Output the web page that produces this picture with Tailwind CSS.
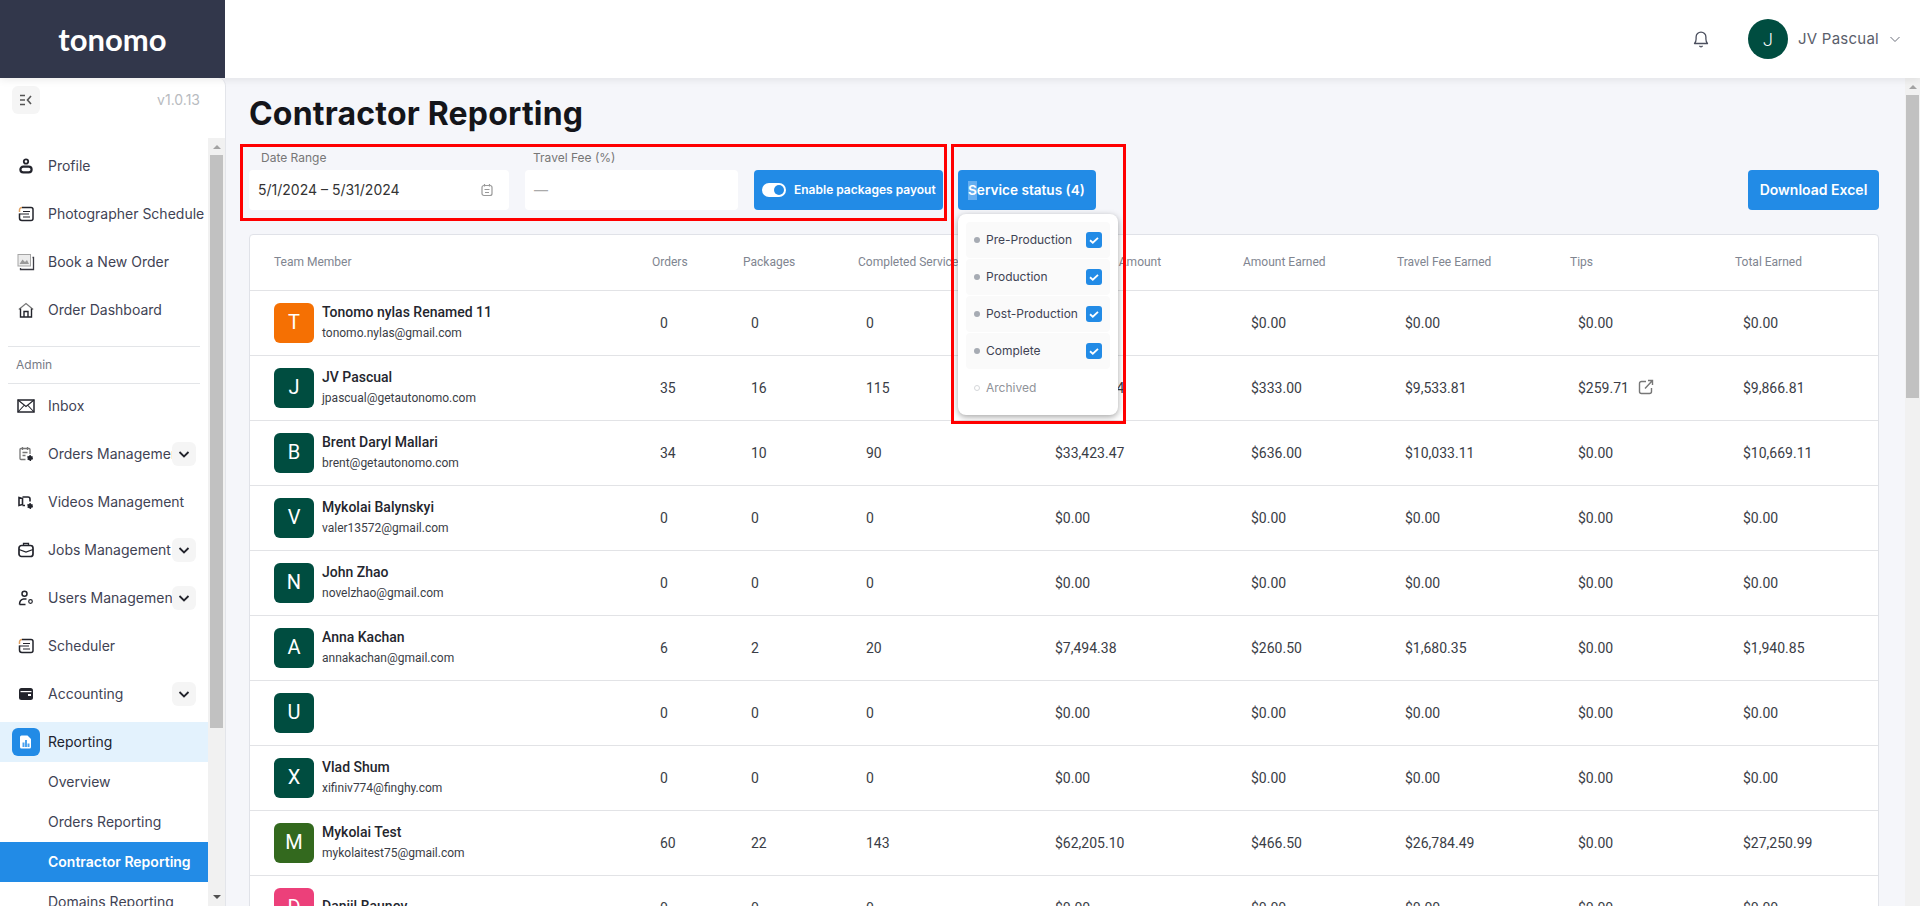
<!DOCTYPE html>
<html lang="en">

<head>
    <meta charset="UTF-8">
    <title>Contractor Reporting</title>
    <script src="https://cdn.jsdelivr.net/npm/@tailwindcss/browser@4"></script>
</head>

<body class="font-[Inter,sans-serif] bg-[#f5f6fa] overflow-hidden">
    <div class="relative flex flex-col h-[906px] overflow-hidden">

        <!-- top bar -->
        <header class="relative z-10 flex items-center h-[78px] bg-white shadow-[0_2px_8px_rgba(0,0,0,0.08)] shrink-0">
            <div class="flex items-center justify-center w-[225px] h-full bg-[#32374b] text-white text-[31px] font-bold font-[Lato,sans-serif]">tonomo</div>
            <div class="flex-1"></div>
            <svg class="w-5 h-5 text-[#4b4f5e] mr-[37px]" viewBox="0 0 20 20" fill="none" stroke="currentColor" stroke-width="1.3" stroke-linejoin="round"><path d="M3.5 14.5c1.2-1.2 1.6-2.4 1.6-4.5V8a4.9 4.9 0 0 1 9.800 0v2c0 2.100.4 3.300 1.600 4.500z" /><path d="M8.500 16.800a1.600 1.600 0 0 0 3 0" /></svg>
            <div class="flex items-center justify-center w-10 h-10 rounded-full bg-[#004d40] text-white text-[18px] font-light font-[Roboto,sans-serif]">J</div>
            <span class="ml-[10px] text-[15px] text-[#5a5e6b] tracking-[0.25px]">JV Pascual</span>
            <svg class="w-[12px] h-[12px] ml-[10px] mr-[19px] text-[#6b6f7b]" viewBox="0 0 12 12" fill="none" stroke="currentColor" stroke-width="1"><path d="M1.500 4l4.500 4.500L10.500 4" /></svg>
        </header>

        <div class="flex flex-1 min-h-0">

            <!-- sidebar -->
            <aside class="flex flex-col w-[226px] shrink-0 bg-white border-r border-[#e3e5ea] rounded-tr-lg">
                <div class="flex items-start justify-between h-[60px] pt-2 pl-3 pr-[25px] shrink-0">
                    <div class="flex items-center justify-center w-7 h-7 bg-[#f5f5f5] rounded-md">
                        <svg class="w-4 h-4 text-[#555]" viewBox="0 0 16 16" fill="none" stroke="currentColor" stroke-width="1.600"><path d="M2 3.500h5M2 8h5M2 12.500h5M13 4L9.500 8l3.500 4" /></svg>
                    </div>
                    <span class="text-sm leading-7 text-[#b8bbc0]">v1.0.13</span>
                </div>
                <div class="flex flex-1 min-h-0">
                    <nav class="w-[208px] overflow-hidden text-sm text-[#3f4354] pt-1">
                        <div class="flex items-center h-12 pl-[18px]">
                            <svg class="w-[16px] h-[16px] mr-[14px] text-[#23242c]" viewBox="0 0 16 16" fill="none" stroke="currentColor"><circle cx="8" cy="3.500" r="2.200" stroke-width="1.800" /><rect x="2.400" y="8.600" width="11.200" height="5.800" rx="2.900" stroke-width="2.200" /></svg>
                            <span>Profile</span>
                        </div>
                        <div class="flex items-center h-12 pl-[18px]">
                            <svg class="w-[16px] h-[16px] mr-[14px] text-[#23242c]" viewBox="0 0 16 16" fill="none" stroke="currentColor" stroke-width="1.500"><path d="M4 1.500h9a2 2 0 0 1 2 2v9a2 2 0 0 1-2 2H4a2.500 2.500 0 0 1-2.500-2.500V7.500" /><path d="M1.500 6V4A2.500 2.500 0 0 1 4 1.500" stroke="#e0a060" /><path d="M5 5.500h7M1.500 8h9.500M5 11h7" stroke-width="1.100" /></svg>
                            <span class="whitespace-nowrap">Photographer Schedule</span>
                        </div>
                        <div class="flex items-center h-12 pl-[17px]">
                            <svg class="w-[18px] h-[18px] mr-[13px]" viewBox="0 0 18 18" fill="none"><rect x="1" y="1.500" width="12.500" height="11.500" fill="#ececec" stroke="#a5a5a5" /><path d="M2.500 11l3-4.500 2.500 2.500 2-2 2 4z" fill="#9a9a9a" /><path d="M15.500 4.500h1v12H3.500v-1.500" stroke="#3a3a42" stroke-width="1.300" /></svg>
                            <span>Book a New Order</span>
                        </div>
                        <div class="flex items-center h-12 pl-[18px]">
                            <svg class="w-[16px] h-[16px] mr-[14px] text-[#23242c]" viewBox="0 0 16 16" fill="none" stroke="currentColor" stroke-width="1.200"><path d="M.8 7.500L8 1.500l7.200 6" stroke="#777" /><path d="M2.500 6.500v8.500h11V6.500" stroke-width="1.400" /><path d="M6 15V9.500h4V15" stroke-width="1.400" /></svg>
                            <span>Order Dashboard</span>
                        </div>
                        <div class="mx-2 mt-3 -mb-[2px] w-[192px] h-[38px] flex items-center border-y border-[#e3e5e8] pl-2 text-xs text-[#777b85]">Admin</div>
                        <div class="flex items-center h-12 pl-[17px]">
                            <svg class="w-[18px] h-[18px] mr-[13px] text-[#23242c]" viewBox="0 0 18 18" fill="none" stroke="currentColor" stroke-width="1.500"><rect x="1" y="3" width="16" height="12" /><path d="M1 3l8 6.500L17 3M1 15l6-6.500M17 15l-6-6.500" stroke-width="1.100" /></svg>
                            <span>Inbox</span>
                        </div>
                        <div class="flex items-center h-12 pl-[18px]">
                            <svg class="w-[16px] h-[16px] mr-[14px] text-[#777]" viewBox="0 0 16 16" fill="none" stroke="currentColor" stroke-width="1.300"><path d="M7.500 13.500H3a1 1 0 0 1-1-1V3.500a1 1 0 0 1 1-1h8a1 1 0 0 1 1 1v4.500" /><path d="M4.500 1v3M9.500 1v3M4.500 6.500h5M4.500 9.500h3" /><circle cx="12" cy="12" r="2.300" fill="#23242c" stroke="#23242c" stroke-width="1.300" stroke-dasharray="1.300 1" /></svg>
                            <span class="w-[124px] overflow-hidden whitespace-nowrap">Orders Management</span>
                            <div class="flex items-center justify-center w-6 h-6 bg-[#f5f5f5] rounded-md"><svg class="w-3 h-3 text-[#23242c]" viewBox="0 0 12 12" fill="none" stroke="currentColor" stroke-width="1.800"><path d="M1.500 4L6 8.500 10.500 4" /></svg></div>
                        </div>
                        <div class="flex items-center h-12 pl-[18px]">
                            <svg class="w-[16px] h-[16px] mr-[14px] text-[#23242c]" viewBox="0 0 16 16" fill="none" stroke="currentColor" stroke-width="1.600"><path d="M1 3.500l3.500 1v6L1 11.500zM4.500 3H10a2 2 0 0 1 2 2v2.500M4.500 11.500H7" /><circle cx="12" cy="12" r="2.300" fill="currentColor" stroke-width="1.300" stroke-dasharray="1.300 1" /></svg>
                            <span class="whitespace-nowrap">Videos Management</span>
                        </div>
                        <div class="flex items-center h-12 pl-[18px]">
                            <svg class="w-[16px] h-[16px] mr-[14px] text-[#23242c]" viewBox="0 0 16 16" fill="none" stroke="currentColor" stroke-width="1.700"><rect x="1" y="3.500" width="14" height="11" rx="2.500" /><path d="M5.500 3.500V1.500h5v2M1 7.500l7 2.500 7-2.500" stroke-width="1.300" /></svg>
                            <span class="w-[124px] overflow-hidden whitespace-nowrap">Jobs Management</span>
                            <div class="flex items-center justify-center w-6 h-6 bg-[#f5f5f5] rounded-md"><svg class="w-3 h-3 text-[#23242c]" viewBox="0 0 12 12" fill="none" stroke="currentColor" stroke-width="1.800"><path d="M1.500 4L6 8.500 10.500 4" /></svg></div>
                        </div>
                        <div class="flex items-center h-12 pl-[18px]">
                            <svg class="w-[16px] h-[16px] mr-[14px] text-[#23242c]" viewBox="0 0 16 16" fill="none" stroke="currentColor" stroke-width="1.500"><circle cx="6.500" cy="3.800" r="2.500" /><path d="M1.500 14.500c0-3 1-5 4-5.500h3M1.500 14.500h6" /><circle cx="12.500" cy="11.500" r="1.800" stroke-width="1.200" /></svg>
                            <span class="w-[124px] overflow-hidden whitespace-nowrap">Users Management</span>
                            <div class="flex items-center justify-center w-6 h-6 bg-[#f5f5f5] rounded-md"><svg class="w-3 h-3 text-[#23242c]" viewBox="0 0 12 12" fill="none" stroke="currentColor" stroke-width="1.800"><path d="M1.500 4L6 8.500 10.500 4" /></svg></div>
                        </div>
                        <div class="flex items-center h-12 pl-[18px]">
                            <svg class="w-[16px] h-[16px] mr-[14px] text-[#23242c]" viewBox="0 0 16 16" fill="none" stroke="currentColor" stroke-width="1.500"><path d="M4 1.500h9a2 2 0 0 1 2 2v9a2 2 0 0 1-2 2H4a2.500 2.500 0 0 1-2.500-2.500V7.500" /><path d="M1.500 6V4A2.500 2.500 0 0 1 4 1.500" stroke="#e0a060" /><path d="M5 5.500h7M1.500 8h9.500M5 11h7" stroke-width="1.100" /></svg>
                            <span>Scheduler</span>
                        </div>
                        <div class="flex items-center h-12 pl-[18px]">
                            <svg class="w-[16px] h-[16px] mr-[14px] text-[#23242c]" viewBox="0 0 16 16"><rect x="1" y="2" width="14" height="12" rx="2.500" fill="currentColor" /><rect x="2.500" y="5" width="11" height="1.200" fill="#fff" /><rect x="10" y="8" width="3" height="2" fill="#fff" /></svg>
                            <span class="w-[124px] whitespace-nowrap">Accounting</span>
                            <div class="flex items-center justify-center w-6 h-6 bg-[#f5f5f5] rounded-md"><svg class="w-3 h-3 text-[#23242c]" viewBox="0 0 12 12" fill="none" stroke="currentColor" stroke-width="1.800"><path d="M1.500 4L6 8.500 10.500 4" /></svg></div>
                        </div>
                        <div class="flex items-center h-10 mt-1 pl-3 bg-[#e3f2fd] text-[#20232e]">
                            <div class="flex items-center justify-center w-7 h-7 mr-2 rounded-md bg-[#228be6]">
                                <svg class="w-4 h-4" viewBox="0 0 16 16"><path d="M3.500 1.500h6l3.500 3.500v8a1.500 1.500 0 0 1-1.500 1.500h-8A1.500 1.500 0 0 1 2 13V3a1.500 1.500 0 0 1 1.500-1.500z" fill="#fff" /><path d="M4.500 8.500h2V13h-2zM7 6h2v7H7zM9.500 9.500h2V13h-2z" fill="#4da3ee" /></svg>
                            </div>
                            <span>Reporting</span>
                        </div>
                        <div class="flex items-center h-10 pl-12">Overview</div>
                        <div class="flex items-center h-10 pl-12">Orders Reporting</div>
                        <div class="flex items-center h-10 pl-12 bg-[#228be6] text-white font-semibold">Contractor Reporting</div>
                        <div class="flex items-center h-10 pl-12">Domains Reporting</div>
                    </nav>
                    <div class="flex flex-col items-center w-[17px] bg-[#f1f1f1] pb-[1px]">
                        <div class="flex items-center justify-center w-full h-[17px]"><div class="border-x-[4px] border-x-transparent border-b-[4px] border-b-[#a3a3a3]"></div></div>
                        <div class="w-[13px] h-[573px] bg-[#c1c1c1]"></div>
                        <div class="flex-1"></div>
                        <div class="flex items-center justify-center w-full h-[17px]"><div class="border-x-[4px] border-x-transparent border-t-[4px] border-t-[#505050]"></div></div>
                    </div>
                </div>
            </aside>

            <!-- main -->
            <main class="flex-1 min-w-0 overflow-hidden pl-[23px] pr-[26px] pt-4">
                <h1 class="text-[32px] leading-10 font-bold tracking-[0.2px] text-[#14151a]">Contractor Reporting</h1>

                <div class="flex items-end mt-4">
                    <div class="w-[260px]">
                        <div class="h-4 mb-1 ml-3 text-xs text-[#777]">Date Range</div>
                        <div class="flex items-center justify-between h-10 pl-[9px] pr-[15px] bg-white rounded text-sm text-[#333]">
                            <span>5/1/2024 – 5/31/2024</span>
                            <svg class="w-[14px] h-[14px] text-[#999]" viewBox="0 0 14 14" fill="none" stroke="currentColor" stroke-width="1.200"><rect x="2" y="2.500" width="10" height="10" rx="2" /><path d="M4.500 1v2.500M9.500 1v2.500M4.500 6.500h5M5 9.500h4" /></svg>
                        </div>
                    </div>
                    <div class="w-[213px] ml-4">
                        <div class="h-4 mb-1 ml-2 text-xs text-[#777]">Travel Fee (%)</div>
                        <div class="flex items-center h-10 pl-[9px] bg-white rounded text-sm text-[#aaa]">—</div>
                    </div>
                    <div class="flex items-center w-[189px] h-10 ml-4 pl-2 bg-[#228be6] rounded text-white text-xs font-semibold">
                        <div class="flex items-center justify-end w-6 h-[14px] px-[2px] mr-2 bg-white rounded-full"><div class="w-[10px] h-[10px] rounded-full bg-[#228be6]"></div></div>
                        <span class="whitespace-nowrap">Enable packages payout</span>
                    </div>
                    <div class="flex items-center w-[138px] h-10 ml-[15px] pl-[10px] bg-[#228be6] rounded text-white text-[13.600px] font-semibold">
                        <span class="whitespace-nowrap"><span class="inline-block leading-[19px] bg-[#66aef0]">S</span>ervice status (4)</span>
                    </div>
                    <div class="flex-1"></div>
                    <div class="flex items-center justify-center w-[131px] h-10 bg-[#228be6] rounded text-white text-sm font-semibold">Download Excel</div>
                </div>

                <!-- table -->
                <div class="mt-6 bg-white border border-[#e0e2e8] rounded-t">
                    <table class="w-full table-fixed border-collapse font-[Roboto,sans-serif]">
                        <colgroup>
                            <col class="w-[378px]">
                            <col class="w-[91px]">
                            <col class="w-[115px]">
                            <col class="w-[189px]">
                            <col class="w-[196px]">
                            <col class="w-[154px]">
                            <col class="w-[173px]">
                            <col class="w-[165px]">
                            <col>
                        </colgroup>
                        <thead>
                            <tr class="h-[55px] text-xs text-[#808590] text-left">
                                <th class="pl-6 font-normal">Team Member</th>
                                <th class="pl-6 font-normal">Orders</th>
                                <th class="pl-6 font-normal">Packages</th>
                                <th class="pl-6 font-normal whitespace-nowrap overflow-hidden">Completed Services</th>
                                <th class="pl-6 font-normal whitespace-nowrap">Total Service Amount</th>
                                <th class="pl-6 font-normal">Amount Earned</th>
                                <th class="pl-6 font-normal">Travel Fee Earned</th>
                                <th class="pl-6 font-normal">Tips</th>
                                <th class="pl-6 font-normal">Total Earned</th>
                            </tr>
                        </thead>
                        <tbody id="rows"></tbody>
                    </table>
                </div>
            </main>

            <!-- page scrollbar -->
            <div class="flex flex-col items-center w-[15px] shrink-0 bg-[#f1f1f1]">
                <div class="flex items-center justify-center w-full h-[17px]"><div class="border-x-[4px] border-x-transparent border-b-[4px] border-b-[#a3a3a3]"></div></div>
                <div class="w-[13px] h-[303px] bg-[#c1c1c1]"></div>
            </div>
        </div>

        <!-- service status dropdown, sits over the table -->
        <div class="absolute z-20 left-[958px] top-[214px] w-[160px] h-[201px] p-2 bg-white rounded-lg shadow-[0_2px_6px_rgba(0,0,0,0.35)] text-xs text-[#3f4354]">
            <div class="flex items-center h-9 mb-[1px] pl-2 bg-[#fafafa] rounded">
                <span class="w-[6px] h-[6px] rounded-full bg-[#a6abb3] mr-[6px]"></span><span class="flex-1 whitespace-nowrap">Pre-Production</span>
                <svg class="w-4 h-4 mr-2" viewBox="0 0 16 16"><rect width="16" height="16" rx="3" fill="#228be6" /><path d="M4 8.300l2.800 2.400L12 5.800" fill="none" stroke="#fff" stroke-width="1.800" /></svg>
            </div>
            <div class="flex items-center h-9 mb-[1px] pl-2 bg-[#fafafa] rounded">
                <span class="w-[6px] h-[6px] rounded-full bg-[#a6abb3] mr-[6px]"></span><span class="flex-1 whitespace-nowrap">Production</span>
                <svg class="w-4 h-4 mr-2" viewBox="0 0 16 16"><rect width="16" height="16" rx="3" fill="#228be6" /><path d="M4 8.300l2.800 2.400L12 5.800" fill="none" stroke="#fff" stroke-width="1.800" /></svg>
            </div>
            <div class="flex items-center h-9 mb-[1px] pl-2 bg-[#fafafa] rounded">
                <span class="w-[6px] h-[6px] rounded-full bg-[#a6abb3] mr-[6px]"></span><span class="flex-1 whitespace-nowrap">Post-Production</span>
                <svg class="w-4 h-4 mr-2" viewBox="0 0 16 16"><rect width="16" height="16" rx="3" fill="#228be6" /><path d="M4 8.300l2.800 2.400L12 5.800" fill="none" stroke="#fff" stroke-width="1.800" /></svg>
            </div>
            <div class="flex items-center h-9 mb-[1px] pl-2 bg-[#fafafa] rounded">
                <span class="w-[6px] h-[6px] rounded-full bg-[#a6abb3] mr-[6px]"></span><span class="flex-1 whitespace-nowrap">Complete</span>
                <svg class="w-4 h-4 mr-2" viewBox="0 0 16 16"><rect width="16" height="16" rx="3" fill="#228be6" /><path d="M4 8.300l2.800 2.400L12 5.800" fill="none" stroke="#fff" stroke-width="1.800" /></svg>
            </div>
            <div class="flex items-center h-9 pl-2 text-[#8f9299]">
                <span class="w-[6px] h-[6px] rounded-full border border-[#d5d7da] mr-[6px]"></span><span>Archived</span>
            </div>
        </div>

        <!-- red annotation boxes from the screenshot -->
        <div class="absolute z-30 left-[240px] top-[144px] w-[707px] h-[77px] border-[3px] border-[#ff0000]"></div>
        <div class="absolute z-30 left-[951px] top-[144px] w-[175px] h-[280px] border-[3px] border-[#ff0000]"></div>
    </div>

    <script>
        const members = [
            ['T', 'bg-[#f57003]', 'Tonomo nylas Renamed 11', 'tonomo.nylas@gmail.com', '0', '0', '0', '$0.00', '$0.00', '$0.00', '$0.00', '$0.00'],
            ['J', 'bg-[#004d40]', 'JV Pascual', 'jpascual@getautonomo.com', '35', '16', '115', '$41,386.54', '$333.00', '$9,533.81', '$259.71', '$9,866.81'],
            ['B', 'bg-[#004d40]', 'Brent Daryl Mallari', 'brent@getautonomo.com', '34', '10', '90', '$33,423.47', '$636.00', '$10,033.11', '$0.00', '$10,669.11'],
            ['V', 'bg-[#004d40]', 'Mykolai Balynskyi', 'valer13572@gmail.com', '0', '0', '0', '$0.00', '$0.00', '$0.00', '$0.00', '$0.00'],
            ['N', 'bg-[#004d40]', 'John Zhao', 'novelzhao@gmail.com', '0', '0', '0', '$0.00', '$0.00', '$0.00', '$0.00', '$0.00'],
            ['A', 'bg-[#004d40]', 'Anna Kachan', 'annakachan@gmail.com', '6', '2', '20', '$7,494.38', '$260.50', '$1,680.35', '$0.00', '$1,940.85'],
            ['U', 'bg-[#004d40]', '', '', '0', '0', '0', '$0.00', '$0.00', '$0.00', '$0.00', '$0.00'],
            ['X', 'bg-[#004d40]', 'Vlad Shum', 'xifiniv774@finghy.com', '0', '0', '0', '$0.00', '$0.00', '$0.00', '$0.00', '$0.00'],
            ['M', 'bg-[#33691e]', 'Mykolai Test', 'mykolaitest75@gmail.com', '60', '22', '143', '$62,205.10', '$466.50', '$26,784.49', '$0.00', '$27,250.99'],
            ['D', 'bg-[#ec407a]', 'Daniil Baunov', '', '0', '0', '0', '$0.00', '$0.00', '$0.00', '$0.00', '$0.00'],
        ];

        const linkIcon = '<svg class="inline-block w-4 h-4 ml-[9px] -mt-1 text-[#777]" viewBox="0 0 16 16" fill="none" stroke="currentColor" stroke-width="1.400"><path d="M8 2.500H3.500a2 2 0 0 0-2 2v8a2 2 0 0 0 2 2h8a2 2 0 0 0 2-2V9" /><path d="M7 9.500L14 2M10 1.500h4.500V6" /></svg>';

        document.getElementById('rows').innerHTML = members.map((m) => {
            const [letter, color, name, email, ...values] = m;
            const cells = values.map((v) => {
                const extra = v === '$259.71' ? linkIcon : '';
                return `<td class="pl-[32px] whitespace-nowrap">${v}${extra}</td>`;
            }).join('');
            return `<tr class="h-[65px] border-t border-[#e2e3e6] text-sm text-[#3a3d46]">
                <td class="pl-6">
                    <div class="flex items-center">
                        <div class="flex items-center justify-center w-10 h-10 rounded-md text-white text-[20px] ${color}">${letter}</div>
                        <div class="ml-2">
                            <div class="text-sm leading-[19px] font-medium text-[#24262e]">${name}</div>
                            <div class="mt-[2px] text-xs leading-[19px] text-[#3a3d46]">${email}</div>
                        </div>
                    </div>
                </td>${cells}</tr>`;
        }).join('');
    </script>
</body>

</html>
